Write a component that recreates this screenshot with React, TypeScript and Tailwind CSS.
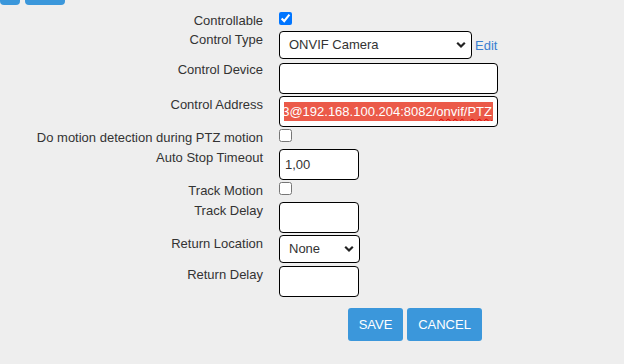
import React from "react";

const labelBase =
  "w-[263px] shrink-0 text-right text-[13px] leading-[15px] text-[#333333]";

function Chevron() {
  return (
    <svg
      className="absolute right-[6px] top-1/2 -translate-y-1/2 pointer-events-none"
      width="10"
      height="7"
      viewBox="0 0 10 7"
    >
      <path d="M1.2 1.2 L5 5 L8.8 1.2" fill="none" stroke="#222" strokeWidth="2.2" />
    </svg>
  );
}

function Row({
  label,
  h,
  lp = "pt-[1px]",
  children,
}: {
  label: string;
  h: string;
  lp?: string;
  children: React.ReactNode;
}) {
  return (
    <div className={`flex items-start ${h}`}>
      <div className={`${labelBase} ${lp}`}>{label}</div>
      <div className="ml-[16px] flex items-start">{children}</div>
    </div>
  );
}

const inputCls =
  "h-[31px] border border-black rounded-[4px] bg-white px-[5px] text-[13px] text-[#333333] outline-none";

export default function App() {
  return (
    <div
      className="w-[624px] h-[364px] bg-[#eeeeee] overflow-hidden"
      style={{ fontFamily: '"Liberation Sans", Arial, sans-serif' }}
    >
      <div className="flex gap-[5px] h-[5px]">
        <div className="w-[20px] h-[5px] bg-[#3b97db] rounded-b-[4px]" />
        <div className="w-[40px] h-[5px] bg-[#3b97db] rounded-b-[4px]" />
      </div>
      <div className="mt-[7px] flex flex-col">
        <Row label="Controllable" h="h-[19px]">
          <input type="checkbox" defaultChecked className="m-0 w-[13px] h-[13px]" />
        </Row>
        <Row label="Control Type" h="h-[32px]">
          <div className="flex items-center">
            <div className="relative">
              <select
                className="appearance-none w-[193px] h-[28px] border border-black rounded-[4px] bg-white pl-[9px] text-[13px] text-[#333333] outline-none"
                defaultValue="onvif"
              >
                <option value="onvif">ONVIF Camera</option>
              </select>
              <Chevron />
            </div>
            <a className="ml-[3px] text-[13px] leading-[15px] text-[#3a7fd0] cursor-pointer">
              Edit
            </a>
          </div>
        </Row>
        <Row label="Control Device" h="h-[33px]" lp="-mt-[1px]">
          <input type="text" className={`${inputCls} w-[219px]`} />
        </Row>
        <Row label="Control Address" h="h-[33px]">
          <div className="w-[219px] h-[31px] border border-black rounded-[4px] bg-white pl-[4px] pr-[4px] flex items-center">
            <div className="w-full overflow-hidden flex justify-end">
              <span className="shrink-0 whitespace-nowrap bg-[#eb5a49] text-white text-[13px] leading-[19px] pr-[1px]">
                123@192.168.100.204:8082/
                <span className="underline decoration-wavy decoration-[#e00000] decoration-1 underline-offset-2">
                  onvif
                </span>
                /
                <span className="underline decoration-wavy decoration-[#e00000] decoration-1 underline-offset-2">
                  PTZ
                </span>
              </span>
            </div>
          </div>
        </Row>
        <Row label="Do motion detection during PTZ motion" h="h-[20px]">
          <input type="checkbox" className="m-0 w-[13px] h-[13px]" />
        </Row>
        <Row label="Auto Stop Timeout" h="h-[33px]">
          <input type="text" defaultValue="1,00" className={`${inputCls} w-[80px]`} />
        </Row>
        <Row label="Track Motion" h="h-[20px]">
          <input type="checkbox" className="m-0 w-[13px] h-[13px]" />
        </Row>
        <Row label="Track Delay" h="h-[33px]">
          <input type="text" className={`${inputCls} w-[80px]`} />
        </Row>
        <Row label="Return Location" h="h-[31px]">
          <div className="relative">
            <select
              className="appearance-none w-[81px] h-[28px] border border-black rounded-[4px] bg-white pl-[9px] text-[13px] text-[#333333] outline-none"
              defaultValue="none"
            >
              <option value="none">None</option>
            </select>
            <Chevron />
          </div>
        </Row>
        <Row label="Return Delay" h="h-[42px]">
          <input type="text" className={`${inputCls} w-[80px]`} />
        </Row>
        <div className="flex gap-[4px] pl-[348px]">
          <button className="h-[33px] w-[55px] bg-[#3b97db] text-white text-[13px] rounded-[3px] pt-[1px]">
            SAVE
          </button>
          <button className="h-[33px] w-[75px] bg-[#3b97db] text-white text-[13px] rounded-[3px] pt-[1px]">
            CANCEL
          </button>
        </div>
      </div>
    </div>
  );
}
